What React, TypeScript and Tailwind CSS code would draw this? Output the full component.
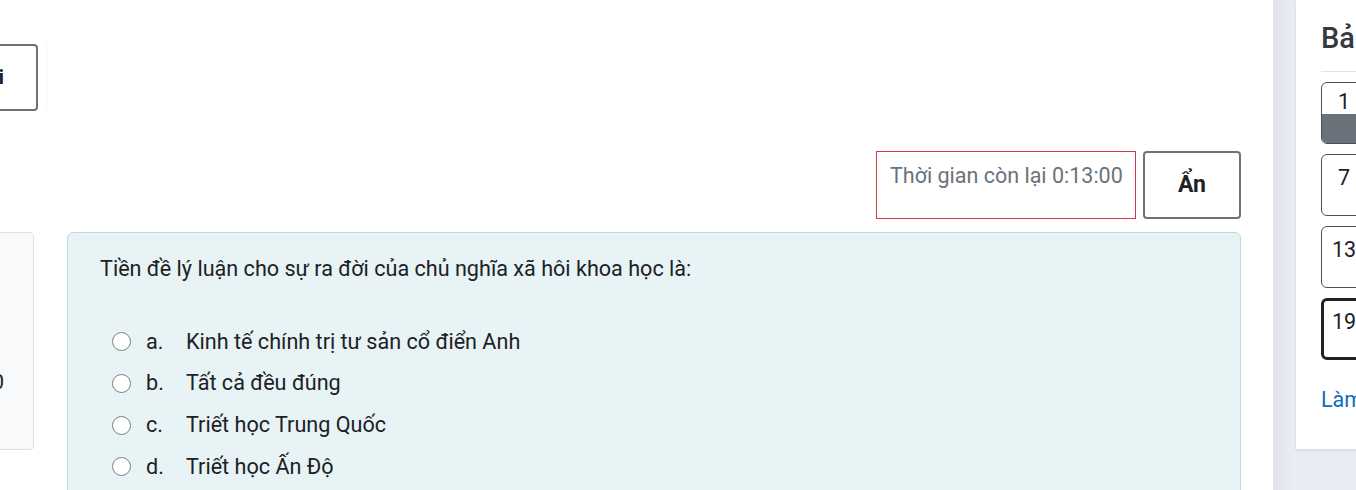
import React from "react";

export default function App() {
  const options = [
    { k: "a.", t: "Kinh tế chính trị tư sản cổ điển Anh" },
    { k: "b.", t: "Tất cả đều đúng" },
    { k: "c.", t: "Triết học Trung Quốc" },
    { k: "d.", t: "Triết học Ấn Độ" },
  ];
  return (
    <div
      className="w-[1356px] h-[490px] overflow-hidden flex bg-[#e9ecf3] text-[#1d2125]"
      style={{ fontFamily: "Roboto, 'Liberation Sans', sans-serif" }}
    >
      {/* main */}
      <div className="w-[1273px] shrink-0 bg-white flex flex-col overflow-hidden">
        <div className="pt-[44px] flex">
          <div className="ml-[-80px] w-[118px] h-[67px] shrink-0 border-2 border-[#6a737b] rounded-[4px] flex items-center justify-end pr-[32px] text-[21px] font-bold text-[#1d2125] whitespace-nowrap">
            Quay lại
          </div>
          <div className="ml-[8px] w-px h-[67px] bg-[#f4f5f6]" />
        </div>

        <div className="mt-[40px] flex justify-end pr-[32px] gap-[7px]">
          <div className="w-[260px] h-[68px] border border-[#cf3a4a] px-[13px] pt-[10px] text-[21.5px] leading-[28px] text-[#6a737b] whitespace-nowrap">
            Thời gian còn lại 0:13:00
          </div>
          <div className="w-[98px] h-[68px] border-2 border-[#6a737b] rounded-[4px] flex items-center justify-center text-[23px] font-bold text-[#1d2125]">
            Ẩn
          </div>
        </div>

        <div className="mt-[13px] flex">
          <div className="ml-[-120px] w-[154px] h-[218px] shrink-0 bg-[#f8f9fa] border border-[#dee2e6] rounded-[4px] flex flex-col items-end pr-[29px] pt-[134px] text-[21px] text-[#1d2125]">
            <span>1,00</span>
          </div>
          <div className="ml-[33px] w-[1174px] h-[300px] shrink-0 bg-[#e7f3f5] border border-[#b8dce2] rounded-[6px] pt-[21px] pl-[32px]">
            <div className="text-[21.6px] leading-[30px] text-[#1d2125]">
              Tiền đề lý luận cho sự ra đời của chủ nghĩa xã hôi khoa học là:
            </div>
            <div className="mt-[37px] pl-[12px] flex flex-col">
              {options.map((o) => (
                <div key={o.k} className="h-[41.7px] flex items-center text-[21.6px] text-[#1d2125] whitespace-nowrap">
                  <span className="w-[19px] h-[19px] rounded-full border border-[#7a7f85] bg-white shrink-0" />
                  <span className="ml-[15px] w-[40px]">{o.k}</span>
                  <span>{o.t}</span>
                </div>
              ))}
            </div>
          </div>
        </div>
      </div>

      {/* drawer shadow strip */}
      <div className="w-[23px] shrink-0 bg-gradient-to-r from-[#dfe2ea] to-[#eceff5]" />

      {/* right drawer */}
      <div className="flex-1 flex flex-col">
        <div className="h-[449px] bg-white shadow-[0_1px_3px_rgba(0,0,0,0.12)] pl-[25px] pt-[19px]">
          <div className="text-[29px] leading-[38px] font-medium text-[#343a40] whitespace-nowrap">
            Bảng điều hướng bài kiểm tra
          </div>
          <div className="mt-[14px] h-px bg-[#dee2e6]" />
          <div className="mt-[10px] flex flex-col gap-[10px]">
            <div className="w-[46px] h-[62px] border border-[#4a5056] rounded-[6px] overflow-hidden flex flex-col">
              <div className="h-[31px] flex items-end justify-center text-[21.5px] leading-[24px] text-[#1d2125]">1</div>
              <div className="flex-1 bg-[#6a737b]" />
            </div>
            <div className="w-[46px] h-[62px] border border-[#4a5056] rounded-[6px] flex justify-center pt-[11px] text-[21.5px] leading-[24px] text-[#1d2125]">7</div>
            <div className="w-[46px] h-[62px] border border-[#4a5056] rounded-[6px] flex justify-center pt-[11px] text-[21.5px] leading-[24px] text-[#1d2125]">13</div>
            <div className="w-[46px] h-[62px] border-[3px] border-[#1d2125] rounded-[6px] flex justify-center pt-[9px] text-[21.5px] leading-[24px] text-[#1d2125]">19</div>
          </div>
          <div className="mt-[24px] text-[21.5px] text-[#0f6cbf] whitespace-nowrap">Làm xong bài kiểm tra...</div>
        </div>
      </div>
    </div>
  );
}
